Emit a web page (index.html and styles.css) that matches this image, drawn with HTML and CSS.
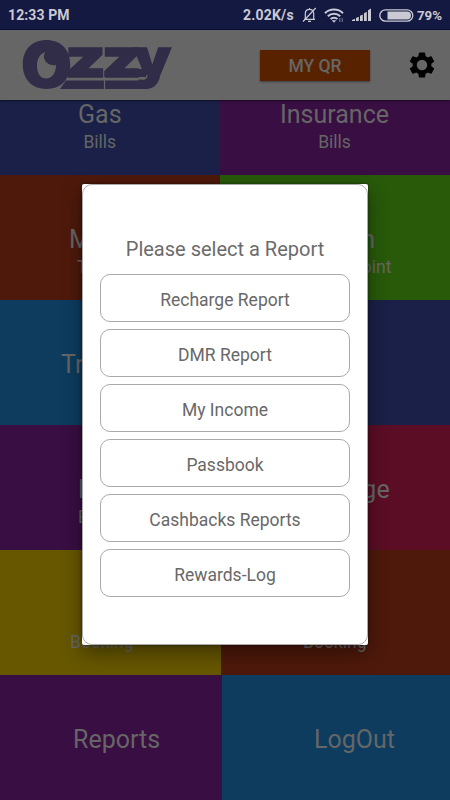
FILE: index.html
```html
<!DOCTYPE html>
<html lang="en">
<head>
    <meta charset="utf-8">
    <title>Ozzy</title>
    <link rel="stylesheet" href="styles.css">
</head>
<body>
    <div class="screen">
        <div class="status">
            <span class="time">12:33 PM</span>
            <span class="speed">2.02K/s</span>
            <svg class="bell" width="15" height="16" viewBox="0 0 15 16" fill="none" stroke="#c9cad4" stroke-width="1.2">
                <path d="M2 12.3h11M3.3 12V6.7C3.3 3.8 5 2.3 7.5 2.3s4.2 1.5 4.2 4.4V12M6 14.3h3M7.5 2.3V1M1 14.5L13.7 1"/>
            </svg>
            <svg class="wifi" width="20" height="15" viewBox="0 0 20 15" fill="none" stroke="#c9cad4" stroke-width="2">
                <path d="M1 5.2C6 .4 14 .4 19 5.2M3.8 8.2c3.4-3.2 9-3.2 12.4 0M6.6 11c1.8-1.7 5-1.7 6.8 0"/>
                <path d="M7.8 12.2h4.4L10 14.8z" fill="#c9cad4" stroke="none"/>
                <path d="M15.8 10v4M18.2 10v4" stroke="#777b98" stroke-width="1"/>
            </svg>
            <svg class="signal" width="20" height="14" viewBox="0 0 20 14" fill="#c9cad4">
                <path d="M0 12l3-1.2V13H0zM4 10l2.8-1.2V13H4zM8 7.8l2.8-1.3V13H8zM12 5.2L14.8 3.7V13H12zM16 2.2L19 .5V13h-3z"/>
            </svg>
            <svg class="battery" width="35" height="13" viewBox="0 0 35 13">
                <rect x=".8" y=".8" width="33" height="11.4" rx="5.7" fill="none" stroke="#c9cad4" stroke-width="1.3"/>
                <path d="M8.5 2.5H28a4 4 0 0 1 0 8H8.5z" fill="#c9cad4"/>
            </svg>
            <span class="percent">79%</span>
        </div>

        <div class="header">
            <svg class="logo" width="151" height="51" viewBox="22 40 151 51" fill="#312d48">
                <g stroke="#312d48" stroke-width="1.6">
                    <text class="logo-text" x="65" y="76.5" font-size="53" textLength="41" lengthAdjust="spacingAndGlyphs">z</text>
                    <text class="logo-text" x="101.5" y="76.5" font-size="53" textLength="40" lengthAdjust="spacingAndGlyphs">z</text>
                    <text class="logo-text" x="134" y="76.5" font-size="53" textLength="37" lengthAdjust="spacingAndGlyphs">y</text>
                </g>
                <path d="M135 69h8l3 8h-11zM66 80.5h78q4 0 5-4l11 1q-4 11.5-13 11.5H60z"/>
                <path d="M104.5 77v12M64 79h79q4 0 4-4" fill="none" stroke="#666" stroke-width="1.2"/>
                <text class="logo-text" x="20.5" y="88" font-size="64" textLength="52" lengthAdjust="spacingAndGlyphs">O</text>
                <ellipse cx="46.5" cy="65" rx="16" ry="20"/>
                <path d="M45 52C38.5 55 37 60 37 66c0 8 4 12.5 9 12.5 6 0 10-5.5 10-13.5-6 1-10.500-2-12-7-.5-2.5.5-4.5 1-6z" fill="#666"/>
            </svg>
            <button class="qr">MY QR</button>
            <svg class="gear" width="30" height="30" viewBox="0 0 24 24">
                <path d="M19.43 12.98c.04-.32.07-.64.07-.98s-.03-.66-.07-.98l2.11-1.65c.19-.15.24-.42.12-.64l-2-3.46c-.12-.22-.39-.3-.61-.22l-2.49 1c-.52-.4-1.08-.73-1.69-.98l-.38-2.65C14.46 2.18 14.25 2 14 2h-4c-.25 0-.46.18-.49.42l-.38 2.65c-.61.25-1.17.59-1.69.98l-2.49-1c-.23-.09-.49 0-.61.22l-2 3.46c-.13.22-.07.49.12.64l2.11 1.65c-.04.32-.07.65-.07.98s.03.66.07.98l-2.11 1.65c-.19.15-.24.42-.12.64l2 3.46c.12.22.39.3.61.22l2.49-1c.52.4 1.08.73 1.69.98l.38 2.65c.03.24.24.42.49.42h4c.25 0 .46-.18.49-.42l.38-2.65c.61-.25 1.17-.59 1.69-.98l2.49 1c.23.09.49 0 .61-.22l2-3.46c.12-.22.07-.49-.12-.64l-2.11-1.65zM12 16.2A4.2 4.2 0 1 1 12 7.8a4.2 4.2 0 0 1 0 8.4z"/>
            </svg>
        </div>

        <div class="tiles">
            <div class="row">
                <div class="tile blue"><div class="label gas"><h2>Gas</h2><p>Bills</p></div></div>
                <div class="tile purple"><div class="label insurance"><h2>Insurance</h2><p>Bills</p></div></div>
            </div>
            <div class="row">
                <div class="tile rust"><div class="label money"><h2>Money</h2><p>Transfer</p></div></div>
                <div class="tile green"><div class="label pan"><h2>UTI Pan</h2><p>Service Point</p></div></div>
            </div>
            <div class="row">
                <div class="tile cyan"><div class="label travel"><h2>Travel</h2></div></div>
                <div class="tile blue"></div>
            </div>
            <div class="row">
                <div class="tile purple"><div class="label event"><h2>Event</h2><p>Booking</p></div></div>
                <div class="tile crimson"><div class="label recharge"><h2>Recharge</h2></div></div>
            </div>
            <div class="row row-wide">
                <div class="tile yellow"><div class="label bus"><h2>Bus</h2><p>Booking</p></div></div>
                <div class="tile rust"><div class="label hotel"><h2>Hotel</h2><p>Booking</p></div></div>
            </div>
            <div class="row row-last">
                <div class="tile purple"><div class="label reports"><h2>Reports</h2></div></div>
                <div class="tile cyan"><div class="label logout"><h2>LogOut</h2></div></div>
            </div>
        </div>

        <div class="dialog">
            <div class="dialog-box">
                <h1>Please select a Report</h1>
                <button>Recharge Report</button>
                <button>DMR Report</button>
                <button>My Income</button>
                <button>Passbook</button>
                <button>Cashbacks Reports</button>
                <button>Rewards-Log</button>
            </div>
        </div>
    </div>
</body>
</html>
```
FILE: styles.css
```css
* {
    box-sizing: border-box;
}

body {
    margin: 0;
    padding: 0;
    font-family: Roboto, sans-serif;
}

h1, h2, p {
    margin: 0;
    font-weight: 400;
}

.screen {
    position: relative;
    display: flex;
    flex-direction: column;
    width: 450px;
    height: 800px;
    overflow: hidden;
}

.status {
    display: flex;
    align-items: center;
    height: 30px;
    padding: 1px 8px 0;
    background: #141941;
    border-bottom: 1px solid #0a0e36;
    color: #c9cad4;
    font-size: 14px;
    font-weight: 700;
}

.time {
    width: 235px;
    letter-spacing: 0.1px;
}

.speed {
    width: 59px;
    letter-spacing: 0.2px;
}

.wifi {
    margin-left: 7px;
}

.signal {
    margin-left: 8px;
}

.battery {
    margin-left: 7px;
}

.percent {
    margin-left: 3px;
    font-size: 13.3px;
}

.header {
    position: relative;
    z-index: 1;
    display: flex;
    align-items: center;
    height: 70px;
    padding-left: 22px;
    background: #666;
    box-shadow: 0 1px 2px rgba(0, 0, 0, 0.5);
}

.logo {
    overflow: visible;
}

.logo-text {
    font-family: Inter, sans-serif;
    font-weight: 900;
}

.qr {
    width: 110px;
    height: 31px;
    margin-left: 87px;
    padding: 2px 0 0;
    border: 0;
    background: #582200;
    box-shadow: 0 1px 2px rgba(0, 0, 0, 0.4);
    color: #666;
    font: 500 17.5px Roboto, sans-serif;
}

.gear {
    margin-left: 37px;
}

/* first row is scrolled half under the header */
.tiles {
    margin-top: -50px;
}

.row {
    display: grid;
    grid-template-columns: 220px 1fr;
    height: 125px;
}

.row-wide {
    grid-template-columns: 221px 1fr;
}

.row-last {
    grid-template-columns: 222px 1fr;
}

.tile {
    display: flex;
    padding-top: 50px;
    color: #666;
    white-space: nowrap;
}

.label {
    text-align: center;
}

.label h2 {
    font-size: 25px;
    line-height: 30px;
}

.label p {
    margin-top: 2px;
    font-size: 17.5px;
    line-height: 20px;
}

.blue { background: #1a2047; }
.purple { background: #390e42; }
.rust { background: #4e190b; }
.green { background: #285a0a; }
.cyan { background: #0d3c5f; }
.crimson { background: #5b0d26; }
.yellow { background: #665700; }

.gas { margin-left: 78px; }
.insurance { margin-left: 60px; }
.money { margin-left: 69px; }
.money p { padding-left: 6px; }
.pan { margin-left: 68px; }
.pan h2 { padding-right: 18px; }
.travel { margin-left: 61px; }
.event { margin-left: 78px; text-align: left; }
.recharge { margin-left: 65px; }
.bus { margin-left: 70px; }
.hotel { margin-left: 82px; }
.reports { margin-left: 73px; }
.logout { margin-left: 92px; }

.dialog {
    position: absolute;
    z-index: 2;
    top: 184px;
    left: 82px;
    width: 286px;
    height: 461px;
    background: #fff;
    border-radius: 2px;
    box-shadow: 0 8px 20px rgba(0, 0, 0, 0.4), 0 0 3px rgba(0, 0, 0, 0.5);
}

.dialog-box {
    display: flex;
    flex-direction: column;
    gap: 7px;
    height: 100%;
    padding: 50px 17px 0;
    border: 1px solid #aaa;
    border-radius: 10px;
}

.dialog-box h1 {
    height: 32px;
    color: #6b6b6b;
    font-size: 20px;
    line-height: 28px;
    text-align: center;
}

.dialog-box button {
    height: 48px;
    padding: 3px 0 0;
    border: 1px solid #aaa;
    border-radius: 10px;
    background: #fff;
    color: #686868;
    font: 400 17.5px Roboto, sans-serif;
}
```
